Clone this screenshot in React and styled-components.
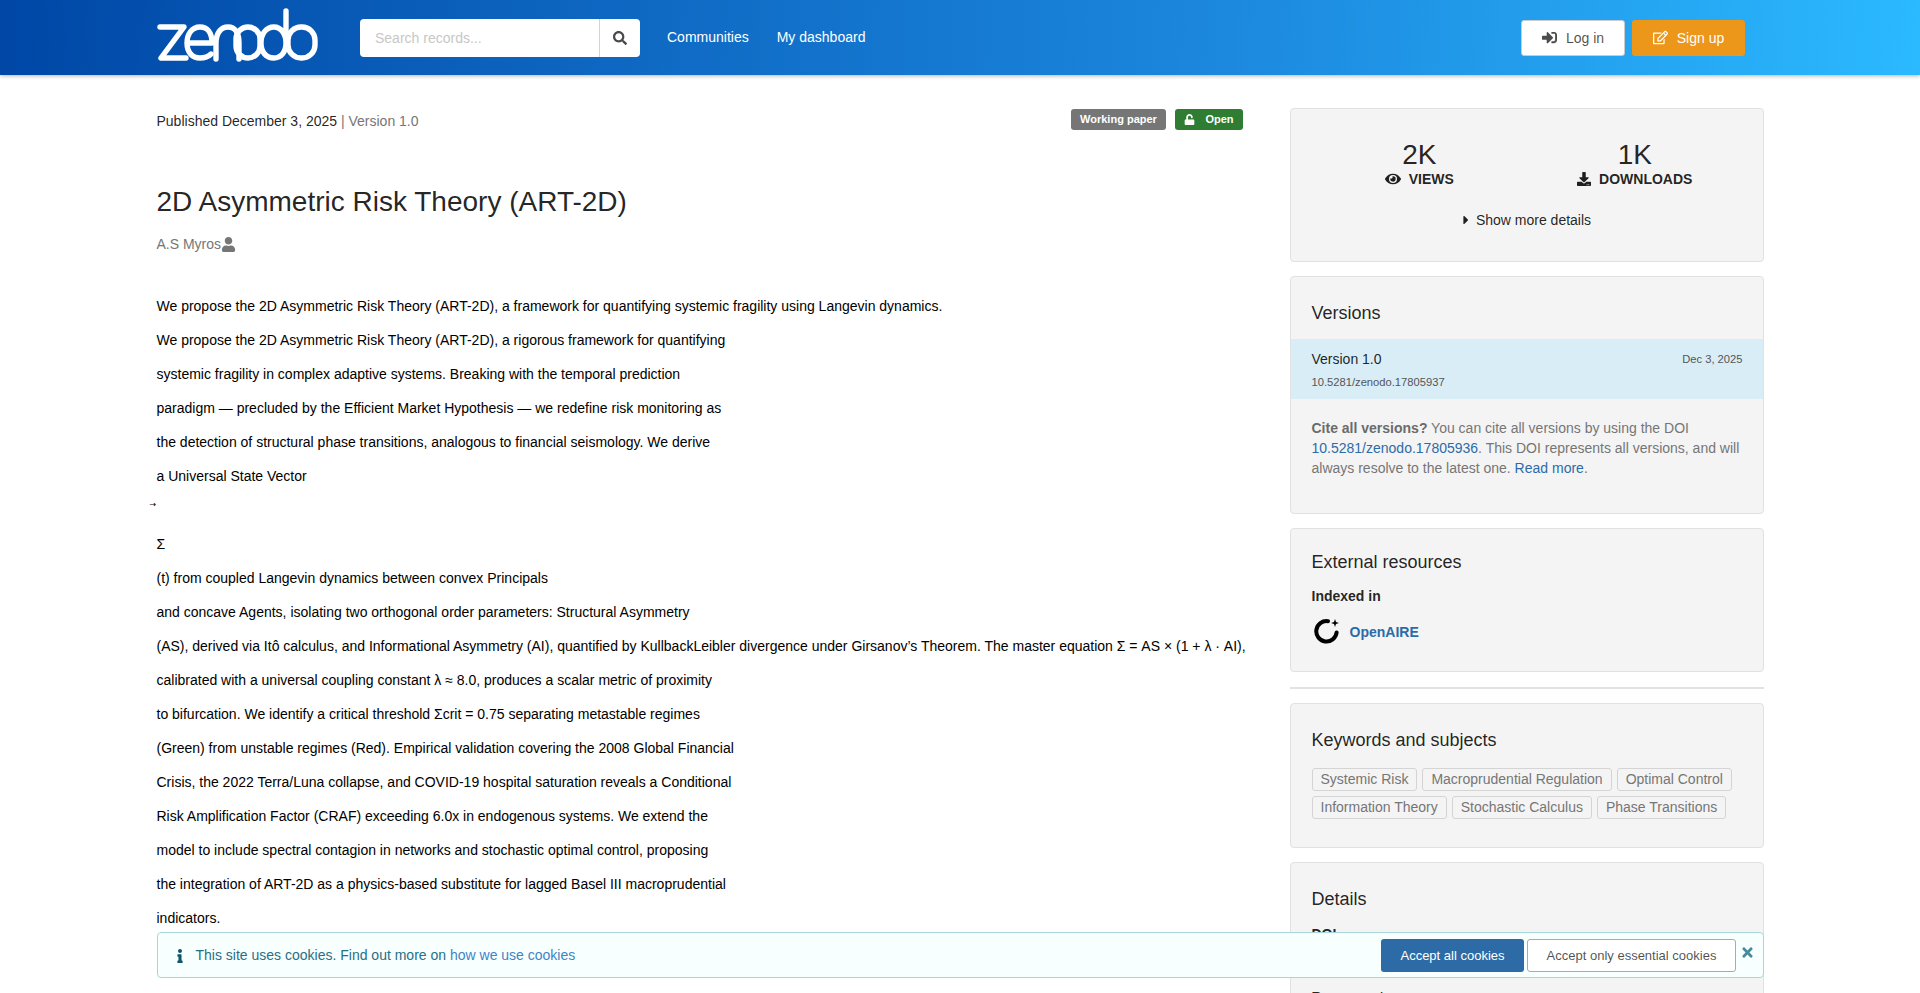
import React from 'react';
import styled, { createGlobalStyle } from 'styled-components';
import {
  FaSearch,
  FaSignInAlt,
  FaRegEdit,
  FaEye,
  FaDownload,
  FaCaretRight,
  FaUser,
  FaUnlock,
  FaInfo,
  FaTimes,
} from 'react-icons/fa';

const GlobalStyle = createGlobalStyle`
  html, body {
    margin: 0;
    height: 100%;
    overflow: hidden;
    background: #fff;
    font-family: "Liberation Sans", Arial, sans-serif;
    font-size: 14px;
    line-height: 20px;
    color: rgba(0, 0, 0, 0.87);
  }
  * { box-sizing: border-box; }
`;

const TopBar = styled.header`
  height: 75px;
  padding: 0 175px 0 157px;
  display: flex;
  align-items: center;
  background: linear-gradient(92deg, #0047a6 0%, #1b86dc 62%, #2bb9ff 100%);
  box-shadow: 0 1px 4px rgba(0, 0, 0, 0.3);
`;

const LogoLink = styled.a`
  display: block;
  width: 163px;
  height: 58px;
  margin-top: -4px;
`;

const SearchBox = styled.form`
  margin-left: 40px;
  width: 280px;
  height: 38px;
  display: flex;
  background: #fff;
  border-radius: 4px;
`;

const SearchInput = styled.div`
  flex: 1;
  padding-left: 15px;
  line-height: 38px;
  color: #c7c7c7;
`;

const SearchButton = styled.div`
  width: 41px;
  display: flex;
  align-items: center;
  justify-content: center;
  border-left: 1px solid #d4d4d5;
  color: #4a4a4a;
  font-size: 14px;
`;

const NavLink = styled.a`
  color: #fff;
  margin-left: ${(p) => p.$gap}px;
  margin-top: -2px;
`;

const AuthButtons = styled.div`
  margin-left: auto;
  display: flex;
  gap: 7px;
`;

const AuthButton = styled.a`
  height: 36px;
  width: ${(p) => p.$width}px;
  display: flex;
  align-items: center;
  justify-content: center;
  gap: 9px;
  border-radius: 3px;
  color: ${(p) => (p.$primary ? '#fff' : 'rgba(0,0,0,0.7)')};
  background: ${(p) => (p.$primary ? '#ec961a' : '#fff')};
  border: ${(p) => (p.$primary ? 'none' : '1px solid #c8ccd0')};
  svg { font-size: 15px; }
`;

const Page = styled.main`
  padding: 33px 156px 0 156.5px;
  display: grid;
  grid-template-columns: 1086.5px 474px;
  column-gap: 47px;
`;

const MetaRow = styled.div`
  height: 26px;
  display: flex;
  align-items: center;
  justify-content: space-between;
`;

const Muted = styled.span`
  color: #767676;
`;

const Badges = styled.div`
  display: flex;
  gap: 9px;
  margin-top: -4px;
`;

const Badge = styled.span`
  height: 21px;
  padding: 0 ${(p) => p.$pad}px;
  display: flex;
  align-items: center;
  gap: 10px;
  border-radius: 3px;
  color: #fff;
  background: ${(p) => p.$color};
  font-size: 11px;
  font-weight: 700;
`;

const Title = styled.h1`
  margin: 0;
  padding-top: 51px;
  font-size: 28px;
  font-weight: 400;
  line-height: 34px;
  color: rgba(0, 0, 0, 0.87);
`;

const Author = styled.div`
  margin-top: 15px;
  display: flex;
  align-items: center;
  color: #767676;
  svg { font-size: 15px; }
`;

const Abstract = styled.section`
  margin-top: 42px;
`;

const Line = styled.p`
  margin: 0 0 14px;
  white-space: nowrap;
  color: #000;
`;

const ArrowMark = styled(Line)`
  margin-left: -7px;
  font-family: "DejaVu Sans", sans-serif;
  font-size: 8px;
  position: relative;
  top: -5px;
`;

const Sidebar = styled.aside`
  display: flex;
  flex-direction: column;
`;

const Panel = styled.section`
  margin-bottom: 14px;
  padding: ${(p) => p.$pad};
  height: ${(p) => p.$height}px;
  flex: none;
  background: #f4f4f4;
  border: 1px solid #e0e1e2;
  border-radius: 4px;
`;

const Stats = styled.div`
  display: grid;
  grid-template-columns: 1fr 1fr;
  text-align: center;
`;

const StatValue = styled.div`
  font-size: 28px;
  line-height: 28px;
  color: rgba(0, 0, 0, 0.87);
`;

const StatLabel = styled.div`
  display: flex;
  justify-content: center;
  align-items: center;
  gap: 8px;
  font-weight: 700;
  svg { font-size: ${(p) => p.$icon}px; }
`;

const ShowMore = styled.div`
  margin-top: 21px;
  display: flex;
  justify-content: center;
  align-items: center;
  gap: 7px;
  svg { width: 6px; height: 14px; }
`;

const PanelTitle = styled.h3`
  margin: 0;
  font-size: 18px;
  font-weight: 400;
  line-height: 24px;
  color: rgba(0, 0, 0, 0.87);
`;

const VersionRow = styled.div`
  margin: 14px -20.5px 0;
  height: 60px;
  padding: 10px 20.5px 0;
  background: #d9edf7;
`;

const VersionLine = styled.div`
  display: flex;
  justify-content: space-between;
  align-items: center;
  color: rgba(0, 0, 0, 0.87);
`;

const SmallText = styled.small`
  display: block;
  font-size: 11.2px;
  color: #555;
`;

const DoiText = styled(SmallText)`
  margin-top: 3px;
`;

const CiteNote = styled.p`
  margin: 19px 0 0;
  color: #767676;
  b { color: #6b6b6b; }
  a { color: #2c6ba8; }
`;

const SubHead = styled.div`
  margin-top: 12px;
  font-weight: 700;
`;

const IndexRow = styled.a`
  margin-top: 13px;
  display: flex;
  align-items: center;
  gap: 11px;
  padding-left: 2px;
  color: #2c6ba8;
  font-weight: 700;
`;

const Divider = styled.hr`
  flex: none;
  width: 100%;
  height: 2px;
  margin: 1px 0 14px;
  border: 0;
  background: #e2e2e2;
`;

const Tags = styled.div`
  margin-top: 16px;
  display: flex;
  flex-wrap: wrap;
  gap: 5px;
`;

const Tag = styled.span`
  height: 23px;
  padding: 0 8px;
  line-height: 21px;
  border: 1px solid #d4d4d5;
  border-radius: 3px;
  color: #767676;
`;

const FieldLabel = styled.div`
  margin-top: ${(p) => p.$top}px;
  font-weight: 700;
`;

const CookieBar = styled.div`
  position: fixed;
  left: 157px;
  top: 932px;
  width: 1607px;
  height: 46px;
  padding: 0 8px 0 14.5px;
  display: flex;
  align-items: center;
  background: #f8ffff;
  border: 1px solid #a9d5de;
  border-radius: 4px;
  color: #276f86;
`;

const CookieText = styled.div`
  margin-left: 9px;
  margin-top: -1px;
  flex: 1;
  a { color: #4183c4; }
`;

const CookieIcon = styled(FaInfo)`
  color: #0e566c;
  font-size: 14px;
  margin-top: 1px;
`;

const CookieButton = styled.button`
  height: 33px;
  width: ${(p) => p.$width}px;
  margin-left: 3px;
  padding: 0;
  font-family: inherit;
  font-size: 13px;
  border-radius: 3px;
  border: ${(p) => (p.$primary ? 'none' : '1px solid #a7abb0')};
  background: ${(p) => (p.$primary ? '#2c6ba6' : '#fff')};
  color: ${(p) => (p.$primary ? '#fff' : 'rgba(0,0,0,0.7)')};
`;

const CloseIcon = styled(FaTimes)`
  margin: -5px 0 0 4px;
  color: #478a9c;
  font-size: 15px;
`;

const abstractLines = [
  'We propose the 2D Asymmetric Risk Theory (ART-2D), a framework for quantifying systemic fragility using Langevin dynamics.',
  'We propose the 2D Asymmetric Risk Theory (ART-2D), a rigorous framework for quantifying',
  'systemic fragility in complex adaptive systems. Breaking with the temporal prediction',
  'paradigm — precluded by the Efficient Market Hypothesis — we redefine risk monitoring as',
  'the detection of structural phase transitions, analogous to financial seismology. We derive',
  'a Universal State Vector',
];

const abstractLinesAfter = [
  'Σ',
  '(t) from coupled Langevin dynamics between convex Principals',
  'and concave Agents, isolating two orthogonal order parameters: Structural Asymmetry',
  '(AS), derived via Itô calculus, and Informational Asymmetry (AI), quantified by KullbackLeibler divergence under Girsanov’s Theorem. The master equation Σ = AS × (1 + λ · AI),',
  'calibrated with a universal coupling constant λ ≈ 8.0, produces a scalar metric of proximity',
  'to bifurcation. We identify a critical threshold Σcrit = 0.75 separating metastable regimes',
  '(Green) from unstable regimes (Red). Empirical validation covering the 2008 Global Financial',
  'Crisis, the 2022 Terra/Luna collapse, and COVID-19 hospital saturation reveals a Conditional',
  'Risk Amplification Factor (CRAF) exceeding 6.0x in endogenous systems. We extend the',
  'model to include spectral contagion in networks and stochastic optimal control, proposing',
  'the integration of ART-2D as a physics-based substitute for lagged Basel III macroprudential',
  'indicators.',
];

const keywords = [
  'Systemic Risk',
  'Macroprudential Regulation',
  'Optimal Control',
  'Information Theory',
  'Stochastic Calculus',
  'Phase Transitions',
];

const ZenodoLogo = () => (
  <svg width="163" height="58" viewBox="157 5 163 58" fill="none" stroke="#fff" strokeWidth="5.4" strokeLinecap="round" strokeLinejoin="round">
    <path d="M160 25H184L161 56H186" />
    <path d="M187 41H212C212 30 207 25 200 25C192 25 187 32 187 41C187 50 192 56 200 56C204 56 208 55 211 52" />
    <path d="M216 57V41C216 31 221 25 228 25C235 25 239 31 239 41V57" />
    <rect x="236" y="25" width="24" height="31" rx="12" />
    <path d="M286 9V41C286 50 281 56 274 56C266 56 261 50 261 41C261 32 266 25 274 25C281 25 286 32 286 41" />
    <rect x="288" y="25" width="27" height="31" rx="13" />
  </svg>
);

const OpenAireLogo = () => (
  <svg width="25" height="25" viewBox="0 0 25 25" fill="none">
    <path d="M14 2.2A10.2 10.2 0 1 0 22.6 13.5" stroke="#000" strokeWidth="4" strokeLinecap="round" />
    <path d="M21 0L22 2.9L25 4L22 5.1L21 8L20 5.1L17 4L20 2.9Z" fill="#000" />
  </svg>
);

const App = () => {
  return (
    <>
      <GlobalStyle />
      <TopBar>
        <LogoLink aria-label="zenodo">
          <ZenodoLogo />
        </LogoLink>
        <SearchBox>
          <SearchInput>Search records...</SearchInput>
          <SearchButton>
            <FaSearch />
          </SearchButton>
        </SearchBox>
        <NavLink $gap={27}>Communities</NavLink>
        <NavLink $gap={28}>My dashboard</NavLink>
        <AuthButtons>
          <AuthButton $width={104}>
            <FaSignInAlt />
            Log in
          </AuthButton>
          <AuthButton $primary $width={113}>
            <FaRegEdit />
            Sign up
          </AuthButton>
        </AuthButtons>
      </TopBar>
      <Page>
        <div>
          <MetaRow>
            <span>
              Published December 3, 2025 <Muted>| Version 1.0</Muted>
            </span>
            <Badges>
              <Badge $color="#767676" $pad={9}>Working paper</Badge>
              <Badge $color="#2e7d32" $pad={9.5}>
                <FaUnlock />
                Open
              </Badge>
            </Badges>
          </MetaRow>
          <Title>2D Asymmetric Risk Theory (ART-2D)</Title>
          <Author>
            A.S Myros
            <FaUser />
          </Author>
          <Abstract>
            {abstractLines.map((line) => (
              <Line key={line}>{line}</Line>
            ))}
            <ArrowMark>→</ArrowMark>
            {abstractLinesAfter.map((line) => (
              <Line key={line}>{line}</Line>
            ))}
          </Abstract>
        </div>
        <Sidebar>
          <Panel $height={154} $pad="32px 20.5px 0">
            <Stats>
              <div>
                <StatValue>2K</StatValue>
                <StatLabel $icon={16}>
                  <FaEye />
                  VIEWS
                </StatLabel>
              </div>
              <div>
                <StatValue>1K</StatValue>
                <StatLabel $icon={14}>
                  <FaDownload />
                  DOWNLOADS
                </StatLabel>
              </div>
            </Stats>
            <ShowMore>
              <FaCaretRight />
              Show more details
            </ShowMore>
          </Panel>
          <Panel $height={238} $pad="24px 20.5px 0">
            <PanelTitle>Versions</PanelTitle>
            <VersionRow>
              <VersionLine>
                Version 1.0
                <SmallText>Dec 3, 2025</SmallText>
              </VersionLine>
              <DoiText>10.5281/zenodo.17805937</DoiText>
            </VersionRow>
            <CiteNote>
              <b>Cite all versions?</b> You can cite all versions by using the DOI{' '}
              <a>10.5281/zenodo.17805936</a>. This DOI represents all versions, and will
              always resolve to the latest one. <a>Read more</a>.
            </CiteNote>
          </Panel>
          <Panel $height={144} $pad="21px 20.5px 0">
            <PanelTitle>External resources</PanelTitle>
            <SubHead>Indexed in</SubHead>
            <IndexRow>
              <OpenAireLogo />
              OpenAIRE
            </IndexRow>
          </Panel>
          <Divider />
          <Panel $height={145} $pad="24px 20.5px 0">
            <PanelTitle>Keywords and subjects</PanelTitle>
            <Tags>
              {keywords.map((word) => (
                <Tag key={word}>{word}</Tag>
              ))}
            </Tags>
          </Panel>
          <Panel $height={300} $pad="24px 20.5px 0">
            <PanelTitle>Details</PanelTitle>
            <FieldLabel $top={13}>DOI</FieldLabel>
            <FieldLabel $top={43}>Resource type</FieldLabel>
          </Panel>
        </Sidebar>
      </Page>
      <CookieBar>
        <CookieIcon />
        <CookieText>
          This site uses cookies. Find out more on <a>how we use cookies</a>
        </CookieText>
        <CookieButton $primary $width={143}>Accept all cookies</CookieButton>
        <CookieButton $width={209}>Accept only essential cookies</CookieButton>
        <CloseIcon />
      </CookieBar>
    </>
  );
};

export default App;
